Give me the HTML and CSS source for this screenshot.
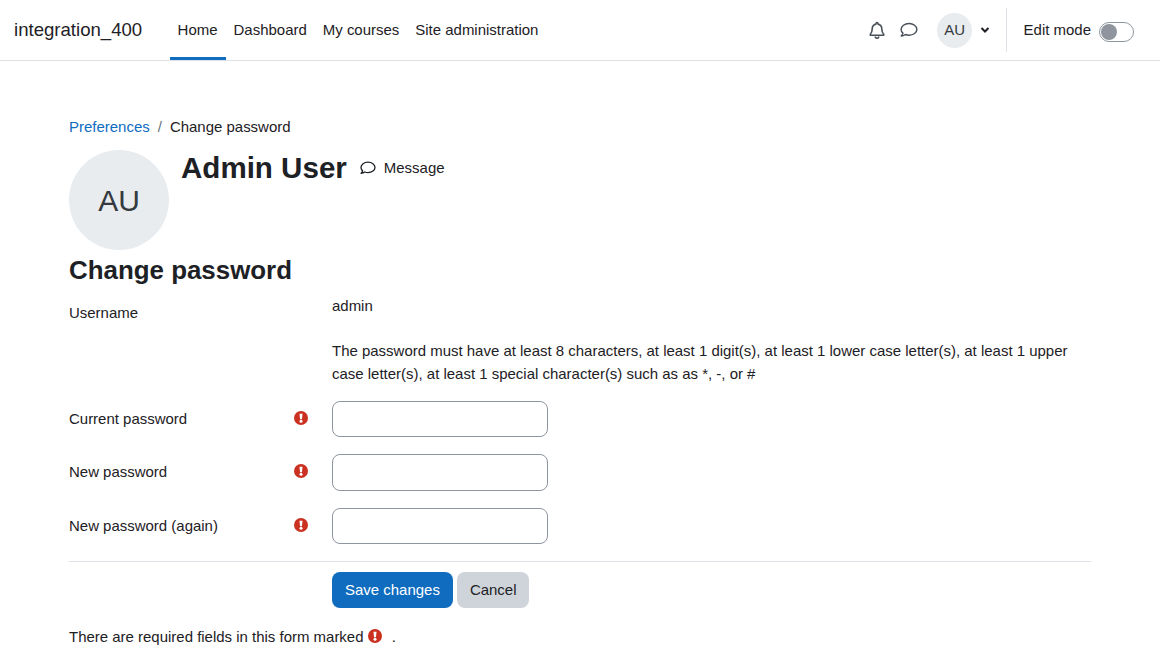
FILE: index.html
```html
<!DOCTYPE html>
<html lang="en">
<head>
<meta charset="utf-8">
<title>Change password</title>
<link rel="stylesheet" href="styles.css">
</head>
<body>
<svg class="defs" aria-hidden="true">
  <defs>
    <symbol id="i-msg" viewBox="0 0 16 16"><path d="M8 2.200C4.100 2.200 1 4.600 1 7.500c0 1.300.6 2.400 1.600 3.300-.2.9-.8 1.800-1.500 2.500 1.300 0 2.700-.5 3.700-1.300 1 .4 2.100.6 3.200.6 3.900 0 7-2.300 7-5.100s-3.100-5.300-7-5.300z" fill="none" stroke="currentColor" stroke-width="1.300" stroke-linejoin="round"/></symbol>
    <symbol id="i-req" viewBox="0 0 14 14"><circle cx="7" cy="7" r="7" fill="#ca3120"/><path d="M5.500 2.800h3l-.5 5.400H6z" fill="#fff"/><circle cx="7" cy="10.300" r="1.500" fill="#fff"/></symbol>
  </defs>
</svg>
<header class="navbar">
  <a class="brand">integration_400</a>
  <nav class="primary">
    <a class="tab active">Home</a>
    <a class="tab">Dashboard</a>
    <a class="tab">My courses</a>
    <a class="tab">Site administration</a>
  </nav>
  <div class="usernav">
    <svg class="nav-icon bell" viewBox="0 0 16 18"><path d="M8 1.500a1 1 0 0 1 1 1v.6c2.400.5 3.800 2.400 3.800 4.900 0 2.900.7 3.900 1.900 5.200v1H1.300v-1c1.200-1.300 1.900-2.300 1.900-5.200 0-2.500 1.400-4.400 3.800-4.900v-.6a1 1 0 0 1 1-1zM6.300 15.500a1.700 1.700 0 0 0 3.400 0" fill="none" stroke="currentColor" stroke-width="1.600" stroke-linejoin="round"/></svg>
    <svg class="nav-icon chat"><use href="#i-msg"/></svg>
    <span class="avatar-small">AU</span>
    <svg class="caret" viewBox="0 0 10 8"><path d="M1.500 2l3.500 3.500L8.500 2" fill="none" stroke="currentColor" stroke-width="2"/></svg>
    <span class="divider"></span>
    <span class="edit-label">Edit mode</span>
    <span class="switch"><span class="knob"></span></span>
  </div>
</header>
<main class="page">
  <div class="breadcrumb"><a class="link">Preferences</a><span class="sep">/</span><span>Change password</span></div>
  <div class="user-head">
    <span class="avatar-large">AU</span>
    <h1 class="user-name">Admin User</h1>
    <a class="message"><svg class="msg-icon"><use href="#i-msg"/></svg>Message</a>
  </div>
  <h2 class="title">Change password</h2>
  <form class="form">
    <div class="row row-user">
      <div class="label">Username</div>
      <div class="value">admin</div>
    </div>
    <div class="row row-desc">
      <div class="label"></div>
      <div class="value">The password must have at least 8 characters, at least 1 digit(s), at least 1 lower case letter(s), at least 1 upper case letter(s), at least 1 special character(s) such as as *, -, or #</div>
    </div>
    <div class="row row-field">
      <div class="label"><span>Current password</span><svg class="req"><use href="#i-req"/></svg></div>
      <input class="input" type="password">
    </div>
    <div class="row row-field">
      <div class="label"><span>New password</span><svg class="req"><use href="#i-req"/></svg></div>
      <input class="input" type="password">
    </div>
    <div class="row row-field">
      <div class="label"><span>New password (again)</span><svg class="req"><use href="#i-req"/></svg></div>
      <input class="input" type="password">
    </div>
    <div class="actions">
      <button class="btn primary-btn" type="button">Save changes</button>
      <button class="btn secondary-btn" type="button">Cancel</button>
    </div>
  </form>
  <p class="note">There are required fields in this form marked <svg class="req inline"><use href="#i-req"/></svg> .</p>
</main>
</body>
</html>
```

FILE: styles.css
```css
* { box-sizing: border-box; }
html, body { margin: 0; height: 667px; overflow: hidden; }
body { font-family: "Liberation Sans", Arial, sans-serif; font-size: 14.98px; line-height: 22.5px; color: #1d2125; background: #fff; }
.defs { display: none; }

.navbar { display: flex; align-items: stretch; height: 61px; border-bottom: 1px solid #dee2e6; padding: 0 26px 0 14px; }
.brand { font-size: 18.6px; align-self: center; margin-right: 27.4px; }
.primary { display: flex; }
.tab { display: flex; align-items: center; padding: 0 8px; border-bottom: 3px solid transparent; border-top: 3px solid transparent; }
.tab.active { border-bottom-color: #0f6cbf; }
.usernav { margin-left: auto; display: flex; align-items: center; }
.nav-icon { color: #495057; display: block; }
.bell { width: 16px; height: 18px; margin-right: 15px; }
.chat { width: 18px; height: 18px; margin-right: 19px; }
.avatar-small { width: 35px; height: 35px; border-radius: 50%; background: #e9ecef; display: flex; align-items: center; justify-content: center; padding-left: 1px; color: #343a40; }
.caret { width: 10px; height: 8px; margin-left: 8px; }
.divider { width: 1px; height: 44px; background: #dee2e6; margin: 0 17px 0 16px; }
.edit-label { margin-right: 8px; }
.switch { width: 35px; height: 20px; border: 1px solid #8f959e; border-radius: 10px; padding: 1px; display: block; background: #fff; margin-top: 4px; }
.knob { display: block; width: 16px; height: 16px; border-radius: 50%; background: #8f959e; }

.page { padding: 55px 69px 0; }
.breadcrumb { display: flex; height: 22px; align-items: center; }
.link { color: #0f6cbf; }
.sep { margin: 0 8px; color: #6a737b; }
.user-head { display: flex; align-items: flex-start; margin-top: 12px; }
.avatar-large { width: 100px; height: 100px; border-radius: 50%; background: #e9ecef; display: flex; align-items: center; justify-content: center; font-size: 30px; padding-top: 2px; color: #343a40; flex: none; }
.user-name { font-size: 29.55px; line-height: 34px; font-weight: 700; margin: 1px 0 0 12px; }
.message { display: flex; align-items: center; margin: 7px 0 0 13px; }
.msg-icon { width: 16px; height: 16px; margin-right: 8px; }
.title { font-size: 25.9px; line-height: 30px; font-weight: 700; margin: 5px 0 0; }

.form { margin-top: 10px; }
.row { display: flex; align-items: flex-start; }
.label { width: 263px; flex: none; display: flex; justify-content: space-between; align-items: center; padding-right: 24px; }
.row-user { height: 44px; }
.row-user .label { padding-top: 7px; }
.row-desc { height: 61.8px; }
.row-desc .value { width: 759px; line-height: 23px; }
.row-field { height: 53.5px; }
.row-field .label { height: 36px; }
.req { width: 14px; height: 14px; display: block; margin-bottom: 1.8px; }
.req.inline { display: inline-block; vertical-align: -1px; margin: 0 5.7px 0 0.3px; }
.input { width: 216px; height: 36.5px; border: 1px solid #8f959e; border-radius: 8px; background: #fff; display: block; padding: 0; }
.actions { border-top: 1px solid #dee2e6; padding: 10px 0 0 263px; display: flex; gap: 4px; }
.btn { height: 36px; border: 0; border-radius: 8px; font: inherit; padding: 0 13px; }
.primary-btn { background: #0f6cbf; color: #fff; }
.secondary-btn { background: #ced4da; color: #1d2125; }
.note { margin: 18px 0 0; }
```
